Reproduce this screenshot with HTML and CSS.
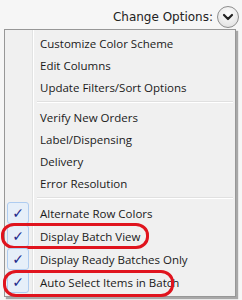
FILE: index.html
```html
<!DOCTYPE html>
<html lang="en">
<head>
  <meta charset="UTF-8">
  <title>Change Options</title>
  <link rel="stylesheet" href="styles.css">
</head>
<body>
  <div class="toolbar">
    <span class="label">Change Options:</span>
    <span class="drop-btn">
      <svg width="20" height="20" viewBox="0 0 20 20">
        <path d="M6 8 L10 12 L14 8" fill="none" stroke="#222" stroke-width="2.2" stroke-linecap="round" stroke-linejoin="round"/>
      </svg>
    </span>
  </div>
  <div class="menu">
    <div class="item">Customize Color Scheme</div>
    <div class="item">Edit Columns</div>
    <div class="item">Update Filters/Sort Options</div>
    <div class="sep"></div>
    <div class="item">Verify New Orders</div>
    <div class="item">Label/Dispensing</div>
    <div class="item">Delivery</div>
    <div class="item">Error Resolution</div>
    <div class="sep"></div>
    <div class="item checked"><span class="check">&#10003;</span>Alternate Row Colors</div>
    <div class="item checked"><span class="check">&#10003;</span>Display Batch View<span class="mark mark-1"></span></div>
    <div class="item checked"><span class="check">&#10003;</span>Display Ready Batches Only</div>
    <div class="item checked"><span class="check">&#10003;</span>Auto Select Items in Batch<span class="mark mark-2"></span></div>
  </div>
</body>
</html>
```

FILE: styles.css
```css
* {
  margin: 0;
  padding: 0;
  box-sizing: border-box;
}

body {
  width: 242px;
  height: 300px;
  overflow: hidden;
  background: #f6f6f6;
  font-family: 'Open Sans', sans-serif;
  font-size: 11.5px;
  color: #1a1a1a;
}

.toolbar {
  height: 29px;
  display: flex;
  justify-content: flex-end;
  align-items: center;
  padding: 4px 3px 0 0;
  gap: 4px;
}

.toolbar .label {
  font-family: 'DejaVu Sans', sans-serif;
  font-size: 12px;
  color: #222;
}

.drop-btn {
  width: 22px;
  height: 22px;
  border-radius: 50%;
  border: 1px solid #8e8e8e;
  background: radial-gradient(circle at 50% 35%, #ffffff, #dcdcdc);
  display: flex;
  align-items: center;
  justify-content: center;
}

.menu {
  position: relative;
  margin-left: 4px;
  width: 232px;
  background: #f0f0f0;
  border: 1px solid #979797;
  box-shadow: 2px 2px 1px #a8a8a8;
  padding: 2px;
  background-image: linear-gradient(to right, transparent 27px, #e2e3e3 27px, #e2e3e3 28px, #ffffff 28px, #ffffff 29px, transparent 29px);
}

.item {
  height: 22px;
  display: flex;
  align-items: center;
  padding-left: 33px;
  position: relative;
}

.item.checked {
  height: 23px;
}

.check {
  position: absolute;
  left: 0;
  top: 0;
  width: 22px;
  height: 22px;
  border: 1px solid #aeccf0;
  border-radius: 3px;
  background: #e6eff9;
  color: #1f2a8c;
  font-size: 14px;
  font-family: 'DejaVu Sans', sans-serif;
  display: flex;
  align-items: center;
  justify-content: center;
}

.sep {
  height: 8px;
  margin-left: 30px;
  background: linear-gradient(to bottom, transparent 3px, #e0e0e0 3px, #e0e0e0 4px, #ffffff 4px, #ffffff 5px, transparent 5px);
}

.mark {
  position: absolute;
  border: 3px solid #e0141e;
  border-radius: 13px / 12px;
}

.mark-1 {
  left: -6px;
  top: -2px;
  width: 148px;
  height: 26px;
}

.mark-2 {
  left: -4px;
  top: -1px;
  width: 171px;
  height: 27px;
}
```
